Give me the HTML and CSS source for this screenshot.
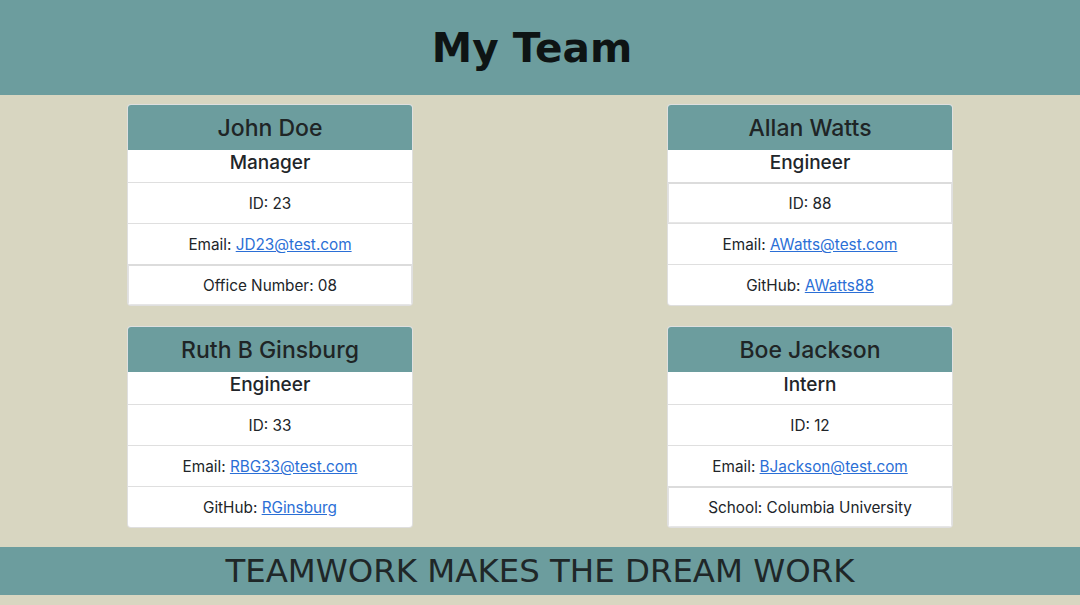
FILE: index.html
```html
<!DOCTYPE html>
<html lang="en">
<head>
<meta charset="utf-8">
<title>My Team</title>
<link rel="stylesheet" href="styles.css">
</head>
<body>
<header class="top">
  <h1 class="title">My Team</h1>
</header>
<main class="team">
  <section class="card">
    <h2 class="card-name">John Doe</h2>
    <h3 class="card-role">Manager</h3>
    <ul class="info">
      <li class="info-item">ID: 23</li>
      <li class="info-item">Email: <a href="#">JD23@test.com</a></li>
      <li class="info-item boxed">Office Number: 08</li>
    </ul>
  </section>
  <section class="card">
    <h2 class="card-name">Allan Watts</h2>
    <h3 class="card-role">Engineer</h3>
    <ul class="info">
      <li class="info-item boxed">ID: 88</li>
      <li class="info-item">Email: <a href="#">AWatts@test.com</a></li>
      <li class="info-item">GitHub: <a href="#">AWatts88</a></li>
    </ul>
  </section>
  <section class="card">
    <h2 class="card-name">Ruth B Ginsburg</h2>
    <h3 class="card-role">Engineer</h3>
    <ul class="info">
      <li class="info-item">ID: 33</li>
      <li class="info-item">Email: <a href="#">RBG33@test.com</a></li>
      <li class="info-item">GitHub: <a href="#">RGinsburg</a></li>
    </ul>
  </section>
  <section class="card">
    <h2 class="card-name">Boe Jackson</h2>
    <h3 class="card-role">Intern</h3>
    <ul class="info">
      <li class="info-item">ID: 12</li>
      <li class="info-item">Email: <a href="#">BJackson@test.com</a></li>
      <li class="info-item boxed">School: Columbia University</li>
    </ul>
  </section>
</main>
<footer class="bottom">
  <p class="motto">TEAMWORK MAKES THE DREAM WORK</p>
</footer>
</body>
</html>
```
FILE: styles.css
```css
* { box-sizing: border-box; }

html, body {
  margin: 0;
  padding: 0;
}

body {
  background: #d8d6c1;
  color: #212529;
  font-family: Inter, "Open Sans", "Liberation Sans", sans-serif;
  min-height: 605px;
}

.top {
  background: #6c9d9e;
  height: 95px;
  display: flex;
  align-items: center;
  justify-content: center;
  padding-right: 16px;
}

.title {
  margin: 0;
  font-family: Verdana, "DejaVu Sans", sans-serif;
  font-weight: bold;
  font-size: 40.6px;
  line-height: 48px;
  color: #0e1414;
}

.team {
  display: grid;
  grid-template-columns: 540px 540px;
  row-gap: 20px;
  padding: 9px 0 19px;
  justify-items: center;
  align-items: start;
}

.card {
  width: 286px;
  background: #fff;
  border: 1px solid rgba(0, 0, 0, 0.125);
  border-radius: 4px;
  overflow: hidden;
}

.card-name {
  margin: 0;
  background: #6c9d9e;
  font-size: 23px;
  font-weight: 500;
  line-height: 29px;
  padding: 9px 0 7px;
  text-align: center;
  color: #1f2526;
}

.card-role {
  margin: 0;
  font-size: 19px;
  font-weight: 500;
  line-height: 24px;
  padding: 1px 0 7px;
  text-align: center;
  color: #212529;
}

.info {
  list-style: none;
  margin: 0;
  padding: 0;
}

.info-item {
  border-top: 1px solid #dfdfdf;
  font-size: 15.3px;
  line-height: 24px;
  padding: 9px 0 7px;
  text-align: center;
}

.info-item.boxed {
  border-top: 2px solid #dcdcdc;
  border-left: 1px solid #e2e2e2;
  border-right: 1px solid #e2e2e2;
  border-bottom: 1px solid #e6e6e6;
  padding: 8px 0 6px;
}

.info-item a {
  color: #2b6fd6;
  text-decoration: underline;
}

.bottom {
  background: #6c9d9e;
  height: 48px;
  display: flex;
  align-items: center;
  justify-content: center;
}

.motto {
  margin: 0;
  font-family: Verdana, "DejaVu Sans", sans-serif;
  font-size: 32.4px;
  line-height: 38px;
  color: #1f2728;
}
```
